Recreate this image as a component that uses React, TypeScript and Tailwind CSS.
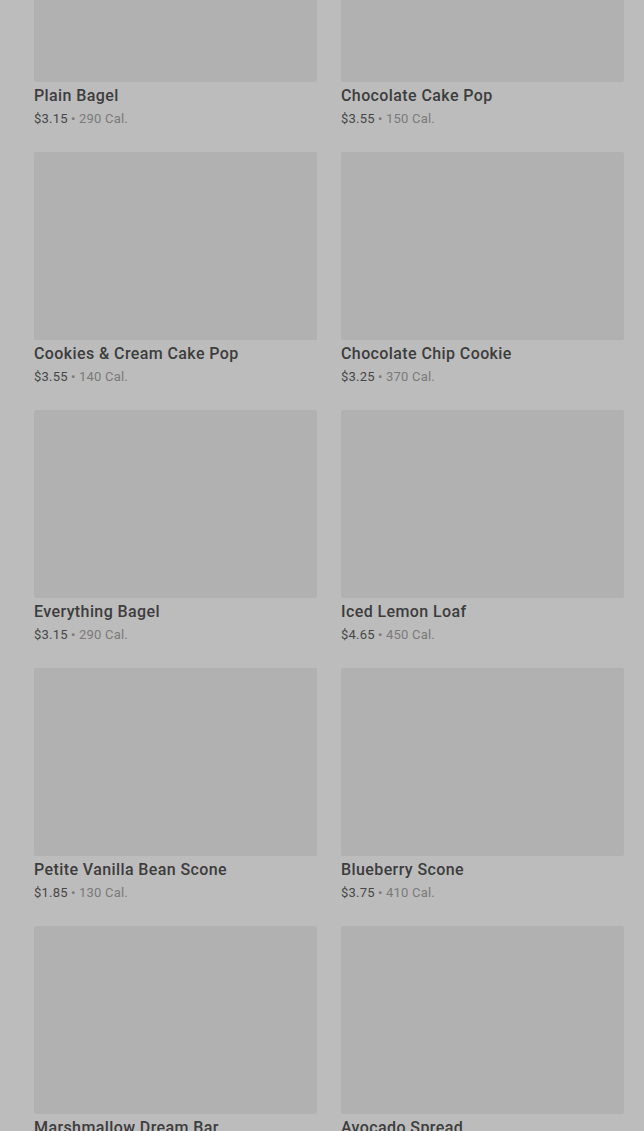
import React from "react";

const items = [
  { name: "Plain Bagel", price: "$3.15", cal: "290 Cal." },
  { name: "Chocolate Cake Pop", price: "$3.55", cal: "150 Cal." },
  { name: "Cookies & Cream Cake Pop", price: "$3.55", cal: "140 Cal." },
  { name: "Chocolate Chip Cookie", price: "$3.25", cal: "370 Cal." },
  { name: "Everything Bagel", price: "$3.15", cal: "290 Cal." },
  { name: "Iced Lemon Loaf", price: "$4.65", cal: "450 Cal." },
  { name: "Petite Vanilla Bean Scone", price: "$1.85", cal: "130 Cal." },
  { name: "Blueberry Scone", price: "$3.75", cal: "410 Cal." },
  { name: "Marshmallow Dream Bar", price: "$2.95", cal: "210 Cal." },
  { name: "Avocado Spread", price: "$1.25", cal: "90 Cal." },
];

export default function App() {
  return (
    <div
      className="h-[1131px] w-[644px] overflow-hidden bg-[#bcbcbc]"
      style={{ fontFamily: "Roboto, 'Noto Sans', sans-serif" }}
    >
      <div className="mt-[-106px] grid grid-cols-2 gap-x-[24px] pl-[34px] pr-[20px]">
        {items.map((it) => (
          <div key={it.name} className="mb-[22px]">
            <div className="h-[188px] rounded-[2px] bg-[#b1b1b1]" />
            <div className="pt-[3px] text-[16px] leading-[22px] font-medium tracking-[0.4px] text-[#3d3d3d]">
              {it.name}
            </div>
            <div className="mt-[1px] text-[13px] leading-[22px] tracking-[0.2px]">
              <span className="text-[#474747]">{it.price}</span>
              <span className="text-[#7a7a7a]"> • {it.cal}</span>
            </div>
          </div>
        ))}
      </div>
    </div>
  );
}
